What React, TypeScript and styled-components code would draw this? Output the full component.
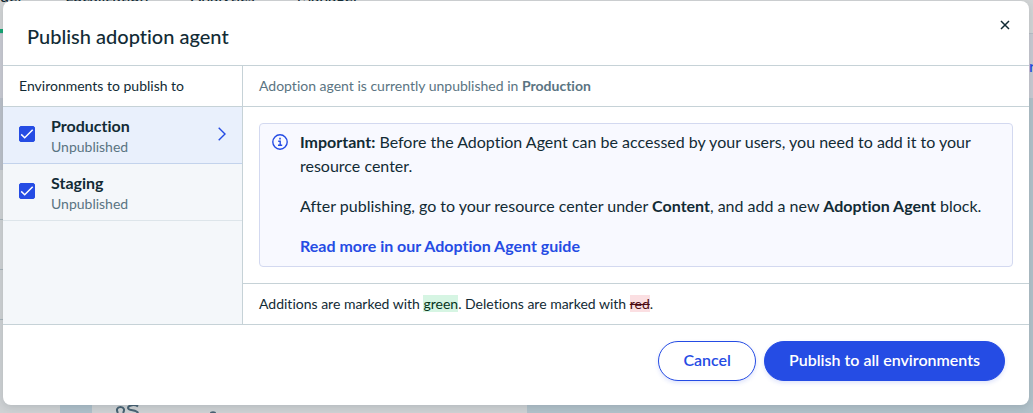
import React, { useState } from "react";
import styled, { createGlobalStyle } from "styled-components";

const blue = "#254ce4";
const ink = "#122b35";
const muted = "#5a7482";
const line = "#c6d2d7";

const GlobalStyle = createGlobalStyle`
  * { box-sizing: border-box; }
  body {
    margin: 0;
    color: ${ink};
    font-family: Lato, "Open Sans", sans-serif;
    font-size: 16px;
    font-variant-ligatures: none;
    line-height: 24px;
  }
  h2, p { margin: 0; }
  button { font: inherit; font-variant-ligatures: none; cursor: pointer; }
`;

const Page = styled.div`
  position: relative;
  overflow: hidden;
  min-height: 100vh;
  background: #cfd2d4;
`;

const Backdrop = styled.div`
  position: absolute;
  inset: 0;
  display: flex;
  flex-direction: column;
`;

const BackdropNav = styled.div`
  display: flex;
  flex-direction: column;
  justify-content: space-between;
  height: 33px;
  background: #d3d5d6;
`;

const NavWords = styled.div`
  display: flex;
  gap: 42px;
  margin-top: -16px;
  font-weight: 500;
`;

const ActiveMark = styled.span`
  width: 40px;
  height: 4px;
  background: #16a673;
`;

const BackdropBar = styled.div`
  display: flex;
  align-items: center;
  justify-content: flex-end;
  height: 65px;
  border-top: 1px solid #b9bec6;
  background: #cacbd3;
`;

const BarLink = styled.span`
  width: 4px;
  overflow: hidden;
  color: ${blue};
  font-weight: 500;
`;

const BackdropBody = styled.div`
  display: flex;
  flex: 1;
`;

const BackdropList = styled.div`
  display: flex;
  flex-direction: column;
  width: 60px;
`;

const BackdropListHead = styled.div`
  height: 72px;
  background: #bcc1ca;
`;

const BackdropListItem = styled.div`
  height: 50px;
  border-bottom: 1px solid #a9b5bb;
`;

const BackdropGutter = styled.div`
  width: 32px;
  background: #afc0ca;
`;

const BackdropCard = styled.div`
  display: flex;
  align-items: flex-end;
  flex: 1;
  padding-left: 23px;
  color: #496373;
`;

const BackdropCanvas = styled.div`
  width: 49%;
  background: #b2c2ca;
`;

const Dialog = styled.section`
  position: relative;
  display: flex;
  flex-direction: column;
  margin: 1px 4px 8px 3px;
  overflow: hidden;
  border-radius: 8px;
  background: #fff;
  box-shadow: 0 2px 8px rgba(18, 43, 53, 0.15);
`;

const Header = styled.header`
  display: flex;
  align-items: flex-start;
  justify-content: space-between;
  height: 65px;
  padding: 16px 16px 0 24px;
  border-bottom: 1px solid ${line};
`;

const Title = styled.h2`
  padding-top: 5px;
  font-size: 20px;
  font-weight: 500;
  line-height: 28px;
`;

const CloseButton = styled.button`
  display: flex;
  padding: 0;
  border: 0;
  background: none;
  color: ${ink};
`;

const Columns = styled.div`
  display: grid;
  grid-template-columns: 240px 1fr;
  border-bottom: 1px solid ${line};
`;

const Sidebar = styled.aside`
  border-right: 1px solid ${line};
  background: #f4f7fa;
`;

const PanelHeading = styled.div<{ $muted?: boolean }>`
  height: 41px;
  padding: 8px 16px;
  border-bottom: 1px solid ${line};
  background: #fff;
  color: ${(p) => (p.$muted ? muted : ink)};
  font-size: 14px;
`;

const EnvironmentRow = styled.label<{ $active?: boolean }>`
  display: flex;
  align-items: center;
  gap: 16px;
  height: 57px;
  padding: 0 16px 2px;
  border-bottom: 1px solid ${(p) => (p.$active ? "#c3d3ec" : "#dde5ea")};
  background: ${(p) => (p.$active ? "#e9f0fc" : "#f4f7fa")};
`;

const CheckWrap = styled.span`
  display: grid;
  width: 16px;
  height: 16px;

  > * { grid-area: 1 / 1; }
  svg { pointer-events: none; }
`;

const Check = styled.input`
  appearance: none;
  width: 16px;
  height: 16px;
  margin: 0;
  border: 1px solid ${blue};
  border-radius: 2px;
  background: #fff;

  &:checked { background: ${blue}; }
`;

const EnvironmentText = styled.span`
  display: flex;
  flex: 1;
  flex-direction: column;
  padding-top: 4px;
  line-height: 21px;
`;

const EnvironmentName = styled.strong`
  font-weight: 700;
`;

const EnvironmentStatus = styled.span`
  color: ${muted};
  font-size: 14px;
`;

const Main = styled.main`
  display: flex;
  flex-direction: column;
`;

const Notice = styled.div`
  display: flex;
  gap: 12px;
  margin: 16px;
  padding: 6px 12px 8px;
  border: 1px solid #d3d9f0;
  border-radius: 4px;
  background: #f8f9ff;
`;

const NoticeIcon = styled.svg`
  flex: none;
  margin-top: 4px;
`;

const NoticeText = styled.div`
  display: flex;
  flex-direction: column;
  gap: 16px;
`;

const GuideLink = styled.a`
  color: ${blue};
  font-weight: 700;
  text-decoration: none;
`;

const Legend = styled.p`
  height: 41px;
  padding: 8px 16px;
  border-top: 1px solid ${line};
  font-size: 14px;
`;

const Added = styled.ins`
  background: #d6f5e3;
  color: #06351d;
  text-decoration: none;
`;

const Removed = styled.del`
  background: #fbdfe2;
  color: #4d0a12;
`;

const Footer = styled.footer`
  display: flex;
  justify-content: flex-end;
  gap: 8px;
  padding: 16px 24px 24px;
`;

const ActionButton = styled.button<{ $primary?: boolean }>`
  height: 40px;
  padding: 0 24px 2px;
  border: 1px solid ${blue};
  border-radius: 20px;
  background: ${(p) => (p.$primary ? blue : "#fff")};
  box-shadow: 0 2px 4px rgba(37, 76, 228, 0.15);
  color: ${(p) => (p.$primary ? "#fff" : blue)};
  font-weight: 600;
`;

const environments = ["Production", "Staging"];

export default function App() {
  const [picked, setPicked] = useState<string[]>(environments);
  const toggle = (name: string) =>
    setPicked((now) => (now.includes(name) ? now.filter((n) => n !== name) : [...now, name]));

  return (
    <Page>
      <GlobalStyle />
      <Backdrop aria-hidden="true">
        <BackdropNav>
          <NavWords>
            <span>der</span>
            <span>Localization</span>
            <span>Analytics</span>
            <span>Manager</span>
          </NavWords>
          <ActiveMark />
        </BackdropNav>
        <BackdropBar>
          <BarLink>r</BarLink>
        </BackdropBar>
        <BackdropBody>
          <BackdropList>
            <BackdropListHead />
            <BackdropListItem />
            <BackdropListItem />
            <BackdropListItem />
          </BackdropList>
          <BackdropGutter />
          <BackdropCard>
            <svg width="112" height="8" viewBox="0 0 112 8" fill="none" stroke="currentColor" strokeWidth="2">
              <path d="M8 8C10 5 9 2 5.500 2S1 5 3 8" />
              <path d="M23 1.500C20-1 13 0 13 3s9 1.500 10 5" />
              <path d="M96 8c0-1 4-1 4 0" />
            </svg>
          </BackdropCard>
          <BackdropCanvas />
        </BackdropBody>
      </Backdrop>

      <Dialog role="dialog" aria-labelledby="dialog-title">
        <Header>
          <Title id="dialog-title">Publish adoption agent</Title>
          <CloseButton type="button" aria-label="Close">
            <svg width="16" height="16" viewBox="0 0 16 16" fill="none" stroke="currentColor" strokeWidth="1.5">
              <path d="M4 4l8 8M12 4l-8 8" />
            </svg>
          </CloseButton>
        </Header>
        <Columns>
          <Sidebar>
            <PanelHeading>Environments to publish to</PanelHeading>
            {environments.map((name, index) => (
              <EnvironmentRow key={name} $active={index === 0}>
                <CheckWrap>
                  <Check type="checkbox" checked={picked.includes(name)} onChange={() => toggle(name)} />
                  <svg width="16" height="16" viewBox="0 0 16 16" fill="none" stroke="#fff" strokeWidth="1.5">
                    <path d="M2.200 8.400l3.500 3.400 8-8" />
                  </svg>
                </CheckWrap>
                <EnvironmentText>
                  <EnvironmentName>{name}</EnvironmentName>
                  <EnvironmentStatus>Unpublished</EnvironmentStatus>
                </EnvironmentText>
                {index === 0 && (
                  <svg width="8" height="14" viewBox="0 0 8 14" fill="none" stroke={blue} strokeWidth="1.4">
                    <path d="M0.7 0.7L7 7 0.7 13.3" />
                  </svg>
                )}
              </EnvironmentRow>
            ))}
          </Sidebar>
          <Main>
            <PanelHeading $muted>
              Adoption agent is currently unpublished in <strong>Production</strong>
            </PanelHeading>
            <Notice>
              <NoticeIcon width="16" height="16" viewBox="0 0 16 16" fill="none" stroke={blue} strokeWidth="1.4">
                <circle cx="8" cy="8" r="7.2" />
                <path d="M6.200 7.200h2v4M6 11.300h4.200" />
                <path d="M7.200 4.700h1.600" strokeWidth="1.7" />
              </NoticeIcon>
              <NoticeText>
                <p>
                  <strong>Important:</strong> Before the Adoption Agent can be accessed by your users, you need to add it
                  to your resource center.
                </p>
                <p>
                  After publishing, go to your resource center under <strong>Content</strong>, and add a new{" "}
                  <strong>Adoption Agent</strong> block.
                </p>
                <p>
                  <GuideLink href="#guide">Read more in our Adoption Agent guide</GuideLink>
                </p>
              </NoticeText>
            </Notice>
            <Legend>
              Additions are marked with <Added>green</Added>. Deletions are marked with <Removed>red</Removed>.
            </Legend>
          </Main>
        </Columns>
        <Footer>
          <ActionButton type="button">Cancel</ActionButton>
          <ActionButton type="button" $primary>
            Publish to all environments
          </ActionButton>
        </Footer>
      </Dialog>
    </Page>
  );
}
